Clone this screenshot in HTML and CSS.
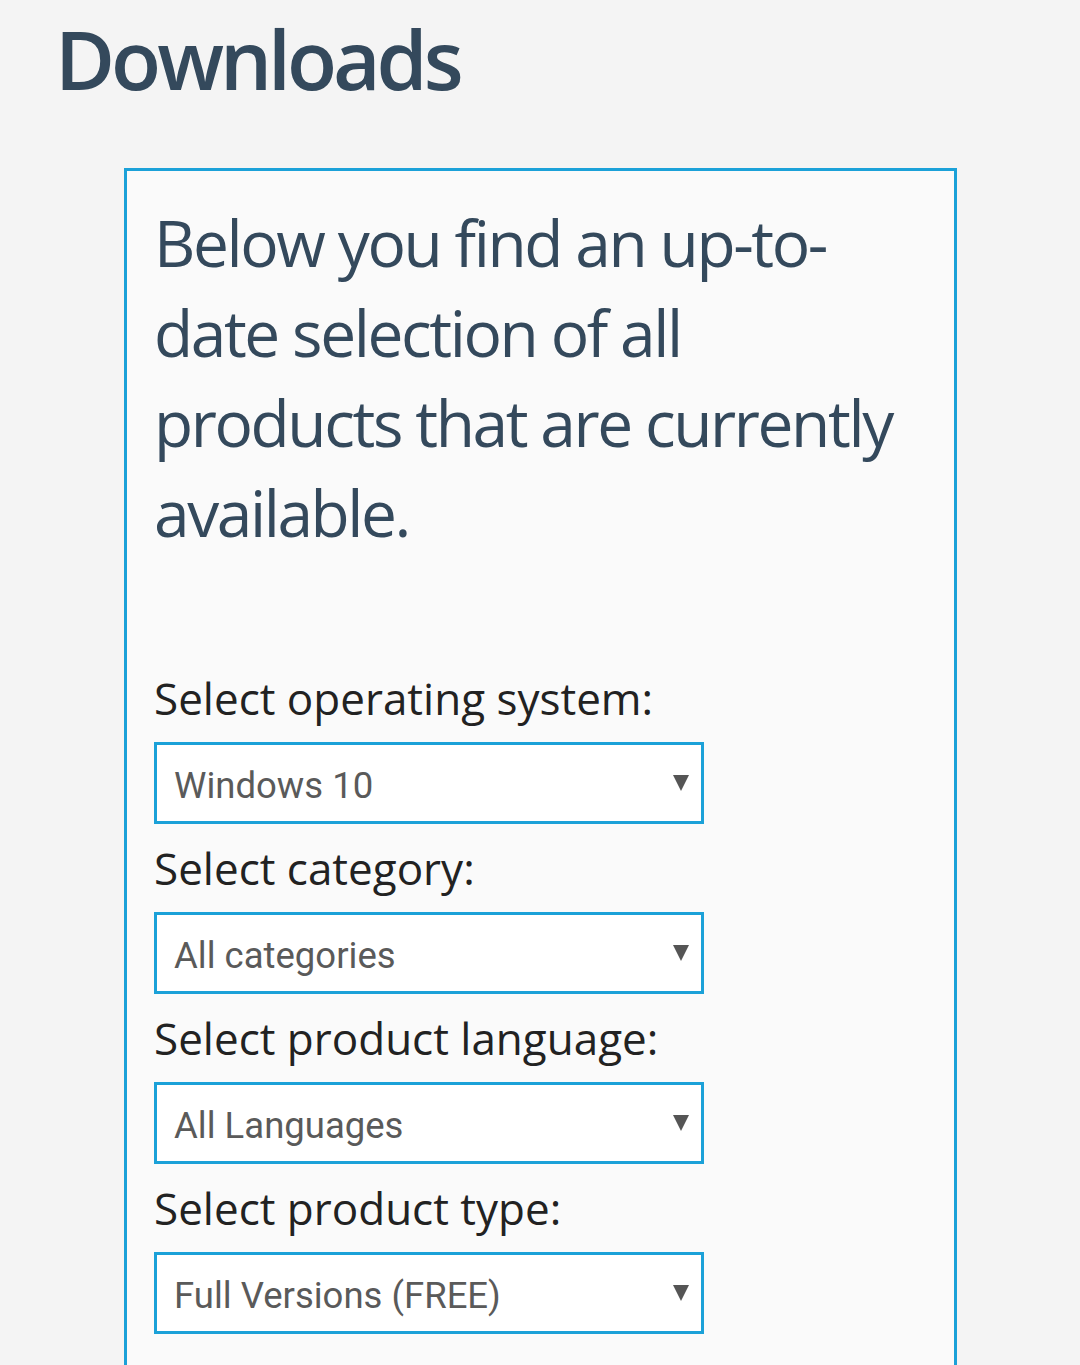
FILE: index.html
```html
<!DOCTYPE html>
<html lang="en">
<head>
<meta charset="utf-8">
<title>Downloads</title>
<link rel="stylesheet" href="styles.css">
</head>
<body>
<main class="page">
  <h1 class="title">Downloads</h1>
  <section class="panel">
    <p class="intro">Below you find an up-to-date selection of all products that are currently available.</p>
    <form class="filters">
      <label class="field">
        <span class="field-label">Select operating system:</span>
        <span class="select-wrap">
          <select class="select"><option>Windows 10</option></select>
        </span>
      </label>
      <label class="field">
        <span class="field-label">Select category:</span>
        <span class="select-wrap">
          <select class="select"><option>All categories</option></select>
        </span>
      </label>
      <label class="field">
        <span class="field-label">Select product language:</span>
        <span class="select-wrap">
          <select class="select"><option>All Languages</option></select>
        </span>
      </label>
      <label class="field">
        <span class="field-label">Select product type:</span>
        <span class="select-wrap">
          <select class="select"><option>Full Versions (FREE)</option></select>
        </span>
      </label>
    </form>
  </section>
</main>
</body>
</html>
```

FILE: styles.css
```css
html, body {
  margin: 0;
  padding: 0;
  background: #f4f4f4;
}

.page {
  padding: 0 0 0 55px;
  font-family: "Open Sans", "Noto Sans", sans-serif;
}

.title {
  margin: 0;
  padding-top: 8px;
  font-size: 82px;
  line-height: 100px;
  font-weight: 600;
  letter-spacing: -4px;
  color: #34495c;
}

.panel {
  margin: 60px 0 0 69px;
  width: 833px;
  border: 3px solid #1ba1d8;
  border-bottom: none;
  background: #fafafa;
  padding: 27px 0 40px 27px;
  box-sizing: border-box;
  min-height: 1300px;
}

.intro {
  margin: 0;
  font-size: 64px;
  line-height: 90px;
  letter-spacing: -2.4px;
  color: #34495c;
  width: 770px;
}

.filters {
  margin-top: 110px;
  display: flex;
  flex-direction: column;
}

.field {
  display: flex;
  flex-direction: column;
  margin-bottom: 14px;
}

.field-label {
  font-size: 44px;
  line-height: 60px;
  color: #222;
  margin-bottom: 14px;
}

.select-wrap {
  position: relative;
  display: block;
  width: 550px;
}

.select-wrap::after {
  content: "";
  position: absolute;
  right: 15px;
  top: 33px;
  border-left: 8px solid transparent;
  border-right: 8px solid transparent;
  border-top: 16px solid #555;
  pointer-events: none;
}

.select {
  -webkit-appearance: none;
  appearance: none;
  display: block;
  width: 550px;
  height: 82px;
  box-sizing: border-box;
  border: 3px solid #1ba1d8;
  border-radius: 0;
  background: #fff;
  padding: 4px 40px 0 17px;
  font-family: Roboto, "Liberation Sans", sans-serif;
  font-size: 36.5px;
  color: #5a5a5a;
  outline: none;
}
```
